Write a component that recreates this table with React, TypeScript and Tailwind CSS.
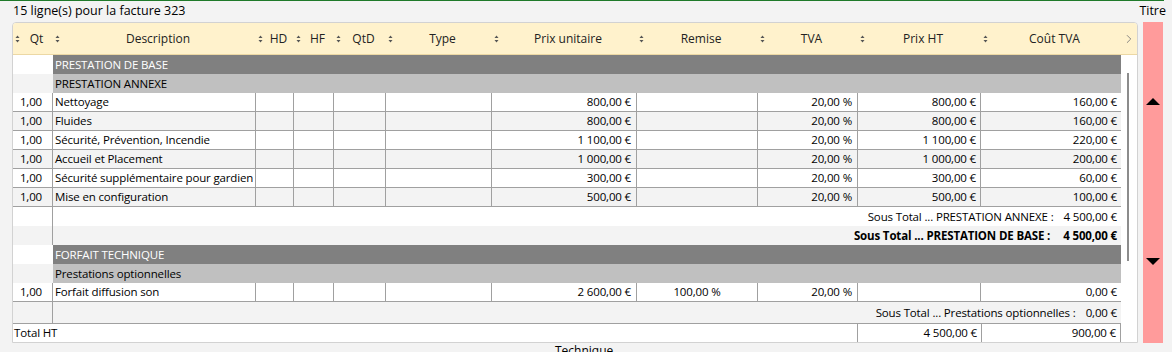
import React from 'react';
import { ChevronRight } from 'lucide-react';

type Row =
  | { kind: 'group'; dark: boolean; label: string }
  | { kind: 'line'; qt: string; desc: string; pu: string; remise: string; tva: string; ht: string; cout: string }
  | { kind: 'sub'; label: string; value: string; bold?: boolean; tall?: boolean };

const columns = [
  { title: 'Qt', w: 'w-[40px]' },
  { title: 'Description', w: 'w-[203px]' },
  { title: 'HD', w: 'w-[38px]' },
  { title: 'HF', w: 'w-[40px]' },
  { title: 'QtD', w: 'w-[52px]' },
  { title: 'Type', w: 'w-[106px]' },
  { title: 'Prix unitaire', w: 'w-[145px]' },
  { title: 'Remise', w: 'w-[121px]' },
  { title: 'TVA', w: 'w-[100px]' },
  { title: 'Prix HT', w: 'w-[123px]' },
  { title: 'Coût TVA', w: 'w-[140px]' },
];

const rows: Row[] = [
  { kind: 'group', dark: true, label: 'PRESTATION DE BASE' },
  { kind: 'group', dark: false, label: 'PRESTATION ANNEXE' },
  { kind: 'line', qt: '1,00', desc: 'Nettoyage', pu: '800,00 €', remise: '', tva: '20,00 %', ht: '800,00 €', cout: '160,00 €' },
  { kind: 'line', qt: '1,00', desc: 'Fluides', pu: '800,00 €', remise: '', tva: '20,00 %', ht: '800,00 €', cout: '160,00 €' },
  { kind: 'line', qt: '1,00', desc: 'Sécurité, Prévention, Incendie', pu: '1 100,00 €', remise: '', tva: '20,00 %', ht: '1 100,00 €', cout: '220,00 €' },
  { kind: 'line', qt: '1,00', desc: 'Accueil et Placement', pu: '1 000,00 €', remise: '', tva: '20,00 %', ht: '1 000,00 €', cout: '200,00 €' },
  { kind: 'line', qt: '1,00', desc: 'Sécurité supplémentaire pour gardien', pu: '300,00 €', remise: '', tva: '20,00 %', ht: '300,00 €', cout: '60,00 €' },
  { kind: 'line', qt: '1,00', desc: 'Mise en configuration', pu: '500,00 €', remise: '', tva: '20,00 %', ht: '500,00 €', cout: '100,00 €' },
  { kind: 'sub', label: 'Sous Total ... PRESTATION ANNEXE :', value: '4 500,00 €' },
  { kind: 'sub', label: 'Sous Total ... PRESTATION DE BASE :', value: '4 500,00 €', bold: true },
  { kind: 'group', dark: true, label: 'FORFAIT TECHNIQUE' },
  { kind: 'group', dark: false, label: 'Prestations optionnelles' },
  { kind: 'line', qt: '1,00', desc: 'Forfait diffusion son', pu: '2 600,00 €', remise: '100,00 %', tva: '20,00 %', ht: '', cout: '0,00 €' },
  { kind: 'sub', label: 'Sous Total ... Prestations optionnelles :', value: '0,00 €', tall: true },
];

function SortIcon() {
  return (
    <svg width="5" height="8" viewBox="0 0 5 8" className="shrink-0">
      <polygon points="2.5,0.5 4.5,3 0.5,3" fill="#555" />
      <polygon points="0.5,5 4.5,5 2.5,7.5" fill="#555" />
    </svg>
  );
}

function GridRow({ row, index }: { row: Row; index: number }) {
  const stripe = index % 2 === 0 ? 'bg-white' : 'bg-[#f3f3f3]';

  if (row.kind === 'group') {
    return (
      <div className="flex h-[19px]">
        <div className={`w-[40px] ${stripe}`} />
        <div
          className={`flex-1 flex items-center pl-[2px] ${
            row.dark ? 'bg-[#808080] text-white' : 'bg-[#c0c0c0] text-black'
          }`}
        >
          {row.label}
        </div>
      </div>
    );
  }

  if (row.kind === 'sub') {
    return (
      <div className={`flex ${row.tall ? 'h-[21px]' : 'h-[19px]'} ${stripe}`}>
        <div className="w-[40px] border-r border-[#a0a0a0]" />
        <div className={`flex-1 flex items-center justify-end pr-[4px] ${row.bold ? 'font-bold' : ''}`}>
          <span>{row.label}</span>
          <span className={row.bold ? 'ml-[13px]' : 'ml-[10px]'}>{row.value}</span>
        </div>
      </div>
    );
  }

  // ligne de prestation
  const cell = 'h-full flex items-center border-r border-[#a0a0a0]';
  return (
    <div className={`flex h-[19px] border-b border-[#a0a0a0] ${stripe}`}>
      <div className={`${cell} w-[40px] justify-end pr-[10px]`}>{row.qt}</div>
      <div className={`${cell} w-[203px] pl-[2px] whitespace-nowrap`}>{row.desc}</div>
      <div className={`${cell} w-[38px]`} />
      <div className={`${cell} w-[40px]`} />
      <div className={`${cell} w-[52px]`} />
      <div className={`${cell} w-[106px]`} />
      <div className={`${cell} w-[145px] justify-end pr-[5px]`}>{row.pu}</div>
      <div className={`${cell} w-[121px] justify-center`}>{row.remise}</div>
      <div className={`${cell} w-[100px] justify-end pr-[5px]`}>{row.tva}</div>
      <div className={`${cell} w-[123px] justify-end pr-[4px]`}>{row.ht}</div>
      <div className="h-full flex items-center w-[140px] justify-end pr-[4px]">{row.cout}</div>
    </div>
  );
}

export default function App() {
  return (
    <div
      className="w-[1172px] h-[352px] overflow-hidden bg-[#f3f3f3] text-[11.5px] tracking-[-0.15px] text-black leading-none"
      style={{ fontFamily: '"Open Sans", "Noto Sans", sans-serif' }}
    >
      <div className="h-px w-[1164px] bg-[#1f7a2a]" />
      <div className="flex items-center h-[21px] text-[12.5px] tracking-normal">
        <span className="pl-[13px]">15 ligne(s) pour la facture 323</span>
        <span className="ml-auto mr-[6px]">Titre</span>
      </div>

      <div className="flex pl-[12px] gap-[5px]">
        {/* tableau des lignes */}
        <div className="w-[1126px] h-[321px] flex flex-col bg-white border border-[#d2d2d2] rounded-tl-[4px] rounded-tr-[4px] overflow-hidden">
          <div className="flex h-[32px] shrink-0 bg-[#fff2cc] border-b border-[#ecd8a4] text-[12px] tracking-normal">
            {columns.map((c) => (
              <div key={c.title} className={`${c.w} flex items-center pl-[2px]`}>
                <SortIcon />
                <span className="flex-1 text-center whitespace-nowrap text-[#222]">{c.title}</span>
              </div>
            ))}
            <div className="w-[16px] flex items-center justify-center">
              <ChevronRight size={14} strokeWidth={1.5} color="#777" />
            </div>
          </div>

          <div className="flex h-[268px] shrink-0">
            <div className="w-[1108px] flex flex-col">
              {rows.map((r, i) => (
                <GridRow key={i} row={r} index={i} />
              ))}
            </div>
            <div className="w-[16px] pt-[18px] pl-[6px]">
              <div className="w-[2px] h-[188px] bg-[#8c8c8c]" />
            </div>
          </div>

          <div className="flex flex-1">
            <div className="w-[1108px] flex border-t border-r border-[#a0a0a0]">
              <div className="w-[844px] flex items-center pl-[1px]">Total HT</div>
              <div className="w-[124px] flex items-center justify-end pr-[4px] border-l border-[#a0a0a0]">4 500,00 €</div>
              <div className="flex-1 flex items-center justify-end pr-[4px] border-l border-[#a0a0a0]">900,00 €</div>
            </div>
          </div>
        </div>

        {/* barre de défilement rouge */}
        <div className="w-[20px] h-[321px] bg-[#ff9b9b] flex flex-col items-center pt-[76px]">
          <svg width="14" height="7" viewBox="0 0 14 7">
            <polygon points="7,0 14,7 0,7" fill="#000" />
          </svg>
          <svg width="14" height="7" viewBox="0 0 14 7" className="mt-[153px]">
            <polygon points="0,0 14,0 7,7" fill="#000" />
          </svg>
        </div>
      </div>

      <div className="pl-[555px] pt-[2px] text-[12px] tracking-normal">Technique</div>
    </div>
  );
}
